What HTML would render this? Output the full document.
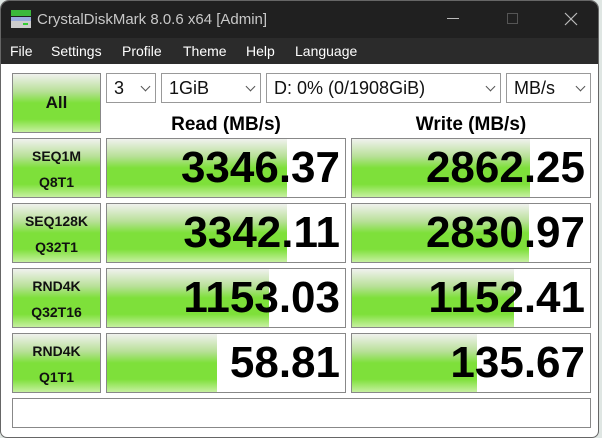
<!DOCTYPE html>
<html><head><meta charset="utf-8"><style>
*{margin:0;padding:0;box-sizing:border-box}
body{width:602px;height:438px;background:#dfe6e3;font-family:"Liberation Sans",sans-serif;position:relative;overflow:hidden}
.win{position:absolute;left:1px;top:1px;width:597px;height:436px;background:#fff;border-radius:8px 8px 6px 6px;overflow:hidden;box-shadow:0 0 0 1px #666}
.title{position:absolute;left:0;top:0;width:100%;height:37px;background:#202020;color:#c8c8c8;font-size:15px}
.title span{position:absolute;left:36px;top:10px}
.menu{position:absolute;left:0;top:37px;width:100%;height:26px;background:#2b2b2b;color:#fff;font-size:14px}
.menu span{position:absolute;top:5px}
.abs{position:absolute}
.btn{position:absolute;left:11px;width:89px;height:60px;border:1px solid #888;background:linear-gradient(#f0f2ee 0%,#b8e098 30%,#7ee03a 50%,#7ee03a 78%,#c6f0a0 100%);text-align:center;font-weight:bold;font-size:14px;color:#111;line-height:26px;padding-top:4px}
.cell{position:absolute;width:240px;height:60px;border:1px solid #888;background:#fff;overflow:hidden}
.fill{position:absolute;left:0;top:0;bottom:0;background:linear-gradient(#f0f2ee 0%,#b8e098 30%,#7ee03a 50%,#7ee03a 78%,#c6f0a0 100%)}
.num{position:absolute;right:5px;top:5px;font-weight:bold;font-size:44px;color:#000;line-height:48px}
.combo{position:absolute;top:72px;height:30px;border:1px solid #999;background:#fff;font-size:18px;padding:4px 0 0 7px;color:#111}
.combo i{position:absolute;right:6px;top:9px;width:7px;height:7px;border-right:1px solid #555;border-bottom:1px solid #555;transform:rotate(45deg)}
.hdr{position:absolute;top:113px;font-weight:bold;font-size:19px;text-align:center;width:240px}
</style></head><body>
<div class="win">
<div class="title">
<svg class="abs" style="left:9px;top:8px" width="22" height="20"><rect x="1" y="1" width="20" height="6" fill="#3cb83c"/><rect x="1" y="8" width="20" height="4" fill="#9ad"/><rect x="1" y="12" width="20" height="7" fill="#ccc"/><rect x="13" y="14" width="5" height="2" fill="#3c3"/></svg>
<span>CrystalDiskMark 8.0.6 x64 [Admin]</span>
<div class="abs" style="left:446px;top:17px;width:12px;height:1px;background:#bbb"></div>
<div class="abs" style="left:506px;top:12px;width:11px;height:11px;border:1px solid #555"></div>
<svg class="abs" style="left:563px;top:11px" width="14" height="14"><path d="M1 1L13 13M13 1L1 13" stroke="#bbb" stroke-width="1.2"/></svg>
</div>
<div class="menu"><span style="left:9px">File</span><span style="left:50px">Settings</span><span style="left:121px">Profile</span><span style="left:182px">Theme</span><span style="left:245px">Help</span><span style="left:294px">Language</span></div>
<div class="btn" style="top:72px;font-size:17px;line-height:50px">All</div>
<div class="combo" style="left:105px;width:50px">3<i></i></div>
<div class="combo" style="left:160px;width:100px">1GiB<i></i></div>
<div class="combo" style="left:265px;width:235px">D: 0% (0/1908GiB)<i></i></div>
<div class="combo" style="left:505px;width:85px">MB/s<i></i></div>
<div class="hdr" style="left:105px">Read (MB/s)</div>
<div class="hdr" style="left:350px">Write (MB/s)</div>

<div class="btn" style="top:137px">SEQ1M<br>Q8T1</div>
<div class="btn" style="top:202px">SEQ128K<br>Q32T1</div>
<div class="btn" style="top:267px">RND4K<br>Q32T16</div>
<div class="btn" style="top:332px">RND4K<br>Q1T1</div>

<div class="cell" style="left:105px;top:137px"><div class="fill" style="width:180px"></div><div class="num">3346.37</div></div>
<div class="cell" style="left:350px;top:137px"><div class="fill" style="width:178px"></div><div class="num">2862.25</div></div>
<div class="cell" style="left:105px;top:202px"><div class="fill" style="width:180px"></div><div class="num">3342.11</div></div>
<div class="cell" style="left:350px;top:202px"><div class="fill" style="width:177px"></div><div class="num">2830.97</div></div>
<div class="cell" style="left:105px;top:267px"><div class="fill" style="width:162px"></div><div class="num">1153.03</div></div>
<div class="cell" style="left:350px;top:267px"><div class="fill" style="width:162px"></div><div class="num">1152.41</div></div>
<div class="cell" style="left:105px;top:332px"><div class="fill" style="width:110px"></div><div class="num">58.81</div></div>
<div class="cell" style="left:350px;top:332px"><div class="fill" style="width:125px"></div><div class="num">135.67</div></div>

<div class="abs" style="left:11px;top:397px;width:579px;height:30px;border:1px solid #888"></div>
</div>
</body></html>
